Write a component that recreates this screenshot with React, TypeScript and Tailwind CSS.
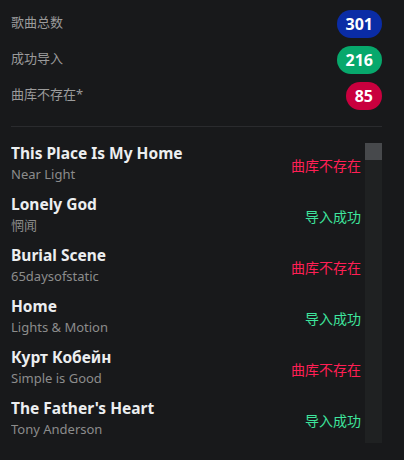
import React from "react";

const stats = [
  { label: "歌曲总数", value: 301, color: "bg-[#0a2ca6]" },
  { label: "成功导入", value: 216, color: "bg-[#07a86c]" },
  { label: "曲库不存在*", value: 85, color: "bg-[#c9003e]" },
];

const songs = [
  { title: "This Place Is My Home", artist: "Near Light", ok: false },
  { title: "Lonely God", artist: "惘闻", ok: true },
  { title: "Burial Scene", artist: "65daysofstatic", ok: false },
  { title: "Home", artist: "Lights & Motion", ok: true },
  { title: "Курт Кобейн", artist: "Simple is Good", ok: false },
  { title: "The Father's Heart", artist: "Tony Anderson", ok: true },
];

const font = "font-['Noto_Sans','Noto_Sans_CJK_SC',sans-serif]";

export default function App() {
  return (
    <div className={`w-[404px] h-[460px] bg-[#18191b] pl-[11px] pr-[22px] overflow-hidden ${font}`}>
      <div className="flex flex-col gap-[8px] pt-[10px] pb-[16px] border-b border-[#2a2b2e]">
        {stats.map((s) => (
          <div key={s.label} className="flex items-center justify-between h-[28px]">
            <span className="text-[13px] text-[#9b9b9b] -mt-[3px]">{s.label}</span>
            <span
              className={`${s.color} h-[28px] rounded-full px-[9px] flex items-center text-[16px] font-bold text-white`}
            >
              {s.value}
            </span>
          </div>
        ))}
      </div>

      <div className="flex mt-[16px] h-[300px]">
        <div className="flex-1 overflow-hidden">
          {songs.map((s) => (
            <div key={s.title} className="flex justify-between items-start h-[51px] pr-[4px]">
              <div className="flex flex-col">
                <span className="text-[15.5px] leading-[20px] font-bold text-[#eceef0]">{s.title}</span>
                <span className="text-[13px] leading-[22px] text-[#8c8c8c]">{s.artist}</span>
              </div>
              <span
                className={`pt-[14px] text-[14px] leading-[18px] ${s.ok ? "text-[#3ee59d]" : "text-[#ff1f55]"}`}
              >
                {s.ok ? "导入成功" : "曲库不存在"}
              </span>
            </div>
          ))}
        </div>
        <div className="w-[17px] bg-[#1f2122] flex flex-col">
          <div className="h-[17px] bg-[#47494c]" />
        </div>
      </div>
    </div>
  );
}
